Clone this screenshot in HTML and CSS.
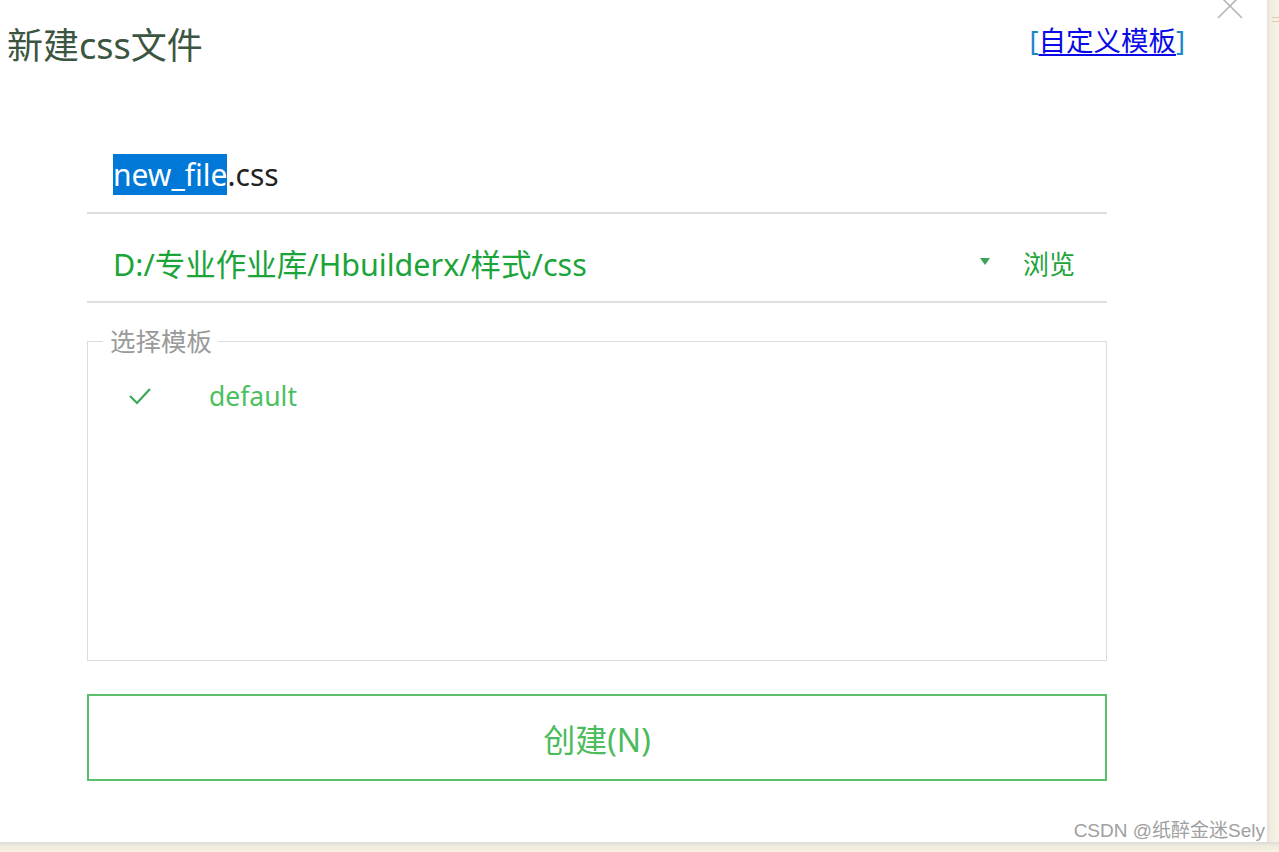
FILE: index.html
```html
<!DOCTYPE html>
<html lang="zh-CN">
<head>
<meta charset="utf-8">
<title>新建css文件</title>
<link rel="stylesheet" href="styles.css">
</head>
<body>
<div class="screen">
  <div class="dialog">
    <header class="header">
      <h1 class="title">新建css文件</h1>
      <span class="custom"><span class="br">[</span><a href="#" class="custom-link">自定义模板</a><span class="br">]</span></span>
    </header>
    <button class="close" aria-label="关闭">
      <svg width="28" height="28" viewBox="0 0 28 28"><path d="M2 -6 L26 18 M26 -6 L2 18" stroke="#b5b5b5" stroke-width="1.6" fill="none"/></svg>
    </button>
    <div class="form">
      <div class="row name-row">
        <span class="sel">new_file</span><span class="ext">.css</span>
      </div>
      <div class="row path-row">
        <span class="path">D:/专业作业库/Hbuilderx/样式/css</span>
        <span class="caret"></span>
        <span class="browse">浏览</span>
      </div>
      <fieldset class="templates">
        <legend class="legend">选择模板</legend>
        <div class="tpl">
          <svg class="check" width="24" height="20" viewBox="0 0 24 20"><path d="M2 10 L9 17 L22 3" stroke="#3aa957" stroke-width="2.2" fill="none"/></svg>
          <span class="tpl-name">default</span>
        </div>
      </fieldset>
      <button class="create">创建(N)</button>
    </div>
    <div class="watermark">CSDN @纸醉金迷Sely</div>
  </div>
  <div class="side">
    <span class="grip"></span>
  </div>
</div>
<div class="bottom"></div>
</body>
</html>
```
FILE: styles.css
```css
html, body {
  margin: 0;
  padding: 0;
  background: #f6f1e2;
}
body {
  width: 1279px;
  height: 852px;
  overflow: hidden;
  font-family: "Noto Sans", "Noto Sans CJK SC", sans-serif;
}
.screen {
  display: flex;
  height: 842px;
}
.dialog {
  position: relative;
  width: 1267px;
  height: 842px;
  background: #fff;
  box-sizing: border-box;
}
.side {
  flex: 1;
  background: linear-gradient(to right, #e4e2dc 0, #f1ede0 4px, #f8f3e4 12px);
  position: relative;
}
.grip {
  position: absolute;
  left: 5px;
  top: 17px;
  width: 7px;
  height: 5px;
  border-top: 1px solid #d8cfa8;
  border-bottom: 1px solid #d8cfa8;
  box-sizing: border-box;
}
.bottom {
  height: 10px;
  background: linear-gradient(to bottom, #dcdbd6 0, #efebdd 4px, #f7f2e2 10px);
}
.header {
  display: flex;
  justify-content: space-between;
  align-items: flex-start;
  height: 90px;
  padding: 0 82px 0 7px;
}
.title {
  margin: 24px 0 0;
  font-weight: normal;
  font-size: 36px;
  line-height: 44px;
  color: #3c5540;
}
.custom {
  margin-top: 24px;
  font-size: 27.5px;
  line-height: 34px;
}
.br {
  color: #1d86c9;
}
.custom-link {
  color: #0a0ae6;
  text-decoration: underline;
  text-underline-offset: 3px;
}
.close {
  position: absolute;
  right: 23px;
  top: 0;
  width: 28px;
  height: 20px;
  padding: 0;
  border: 0;
  background: none;
  overflow: hidden;
}
.close svg {
  display: block;
}
.form {
  margin-left: 87px;
  width: 1020px;
}
.row {
  display: flex;
  align-items: center;
  border-bottom: 2px solid #dfdfdf;
  padding-left: 26px;
  box-sizing: border-box;
}
.name-row {
  margin-top: 47px;
  height: 77px;
  font-size: 30px;
  color: #222;
}
.sel {
  background: #0078d7;
  color: #fff;
}
.path-row {
  height: 89px;
  padding-top: 10px;
  font-size: 30.5px;
  color: #1aa43a;
  padding-right: 32px;
}
.path {
  flex: 1;
}
.caret {
  width: 0;
  height: 0;
  border-left: 5px solid transparent;
  border-right: 5px solid transparent;
  border-top: 7px solid #3aa35a;
  margin-right: 33px;
  margin-top: -3px;
}
.browse {
  font-size: 26px;
  color: #22a33b;
}
.templates {
  margin: 23px 0 0;
  padding: 0;
  height: 335px;
  box-sizing: border-box;
  border: 1px solid #dcdcdc;
}
.legend {
  margin-left: 15px;
  padding: 0 6px 0 7px;
  font-size: 25.5px;
  line-height: 30px;
  color: #9a9a9a;
}
.tpl {
  display: flex;
  align-items: center;
  height: 40px;
  margin-top: 20px;
  padding-left: 40px;
}
.check {
  display: block;
  margin-right: 57px;
}
.tpl-name {
  font-size: 26.5px;
  color: #4cbf5f;
}
.create {
  display: block;
  width: 1020px;
  height: 87px;
  margin-top: 33px;
  border: 2px solid #5abf6b;
  background: #fff;
  font-family: inherit;
  font-size: 32px;
  color: #4cbb5c;
  padding: 0;
}
.watermark {
  position: absolute;
  right: 2px;
  bottom: 0;
  font-family: "Liberation Sans", "Noto Sans CJK SC", sans-serif;
  font-size: 19px;
  line-height: 22px;
  color: #a0a0a0;
}
```
